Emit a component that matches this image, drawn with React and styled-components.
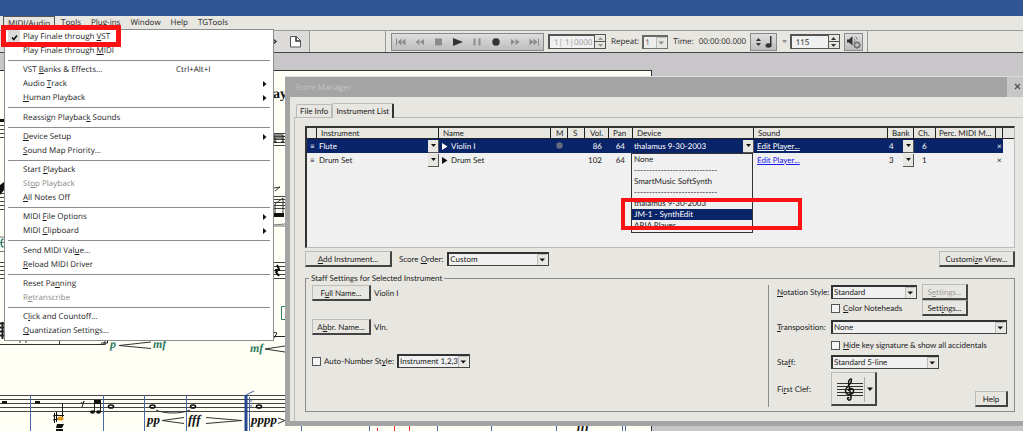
import React from "react";
import styled, { createGlobalStyle, css } from "styled-components";

const UI = '"Open Sans", "Noto Sans", sans-serif';
const DLG = 'Lato, "Liberation Sans", sans-serif';
const FACE = "#e8e6e1";
const NAVY = "#0a246a";

const Global = createGlobalStyle`
  *, *::before, *::after { box-sizing: border-box; }
  body {
    margin: 0;
    background: #c8c6c8;
    color: #1c1c1c;
    font-family: ${UI};
    font-size: 8px;
    font-variant-ligatures: none;
    text-rendering: geometricPrecision;
  }
  button, select, input { font: inherit; color: inherit; margin: 0; text-rendering: inherit; }
  u { text-underline-offset: 1px; }
`;

const Screen = styled.div`
  position: relative;
  display: flex;
  flex-direction: column;
  min-height: 100vh;
  overflow: hidden;
`;
const TitleStrip = styled.div`
  height: 16px;
  background: #2f5595;
`;
const MenuBar = styled.nav`
  display: flex;
  height: 14px;
  padding-left: 3px;
  gap: 10px;
  background: ${FACE};
`;
const MenuTitle = styled.button`
  height: 14px;
  padding: 0;
  border: 0;
  background: none;
  line-height: 12px;
  white-space: nowrap;
  ${(p) =>
    p.$open &&
    css`
      padding: 0 4px;
      margin-right: -4px;
      border: 1px solid #555;
      border-bottom: 0;
      line-height: 11px;
    `}
`;

const Toolbar = styled.div`
  display: flex;
  align-items: center;
  height: 23px;
  border-top: 1px solid #999;
  border-bottom: 1px solid #444;
  background: ${FACE};
`;
const ToolGroup = styled.div`
  display: flex;
  align-items: center;
  justify-content: flex-end;
  width: 310px;
  height: 21px;
  padding-right: 7px;
  border-right: 1px solid #999;
  background: #dcdbd9;
`;
const PlaybackGroup = styled.div`
  display: flex;
  align-items: center;
  height: 21px;
  margin-left: 75px;
  padding: 0 4px 0 2px;
  border-left: 1px solid #999;
  border-right: 1px solid #999;
`;
const Transport = styled.div`
  display: flex;
  align-items: center;
  height: 18px;
  width: 153px;
  margin: 0 4px 0 3px;
  border: 1px solid #888;
  background: linear-gradient(#dedede, #bdbdbd);
`;
const TransportButton = styled.button`
  flex: 1;
  height: 16px;
  padding: 0;
  border: 0;
  background: none;
  svg { display: block; margin: auto; }
`;
const Field = styled.input`
  width: ${(p) => p.$w}px;
  height: 15px;
  padding: 0 1px 0 4px;
  border: 1px solid #555;
  border-width: 2px 0 1px 2px;
  border-radius: 0;
  background: #f0f0f0;
  color: ${(p) => (p.$dim ? "#999" : "#222")};
`;
const Spin = styled.span`
  display: flex;
  flex-direction: column;
  width: 12px;
  height: 15px;
  border: 1px solid #555;
`;
const SpinButton = styled.button`
  display: flex;
  flex: 1;
  align-items: center;
  justify-content: center;
  padding: 0;
  border: 0;
  background: ${FACE};
  & + & { border-top: 1px solid #555; }
`;
const ToolText = styled.label`
  margin-left: ${(p) => p.$gap || 5}px;
  white-space: nowrap;
`;
const ToolButton = styled.button`
  display: flex;
  align-items: center;
  justify-content: center;
  width: ${(p) => p.$w}px;
  height: 18px;
  margin-left: 4px;
  padding: 0;
  border: 1px solid #8a8a8a;
  background: linear-gradient(#dedede, #bdbdbd);
`;

const Workspace = styled.main`
  position: relative;
  flex: 1;
  display: flex;
  padding-top: 17px;
  background: #c8c6c8;
`;
const ScorePage = styled.section`
  width: 652px;
  overflow: hidden;
  border-top: 1px solid #333;
  border-right: 1px solid #333;
  background: #fffff6;
  svg { display: block; }
`;

const Menu = styled.div`
  position: absolute;
  left: 4px;
  top: 29px;
  z-index: 3;
  display: flex;
  flex-direction: column;
  justify-content: space-between;
  width: 270px;
  min-height: 312px;
  padding: 0 3px 2px;
  border: 1px solid #8c8c8c;
  background: #fff;
`;
const MenuGroup = styled.div``;
const Rule = styled.hr`
  width: 100%;
  margin: 0;
  border: 0;
  border-top: 1px solid #8c8c8c;
`;
const MenuItem = styled.button`
  display: flex;
  align-items: center;
  width: 100%;
  height: 14px;
  padding: 0 3px 0 0;
  border: 0;
  background: none;
  color: ${(p) => (p.disabled ? "#8a8a8a" : "#1c1c1c")};
  line-height: 12px;
  text-align: left;
  white-space: nowrap;
`;
const CheckSlot = styled.span`
  display: flex;
  align-items: center;
  justify-content: center;
  width: 12px;
  height: 14px;
  margin-right: 3px;
  background: ${(p) => (p.$on ? "#dcdcdc" : "none")};
`;
const ItemText = styled.span`
  width: 153px;
`;
const Shortcut = styled.span`
  flex: 1;
`;
const Highlight = styled.div`
  position: absolute;
  z-index: 5;
  left: ${(p) => p.$x}px;
  top: ${(p) => p.$y}px;
  width: ${(p) => p.$w}px;
  height: ${(p) => p.$h}px;
  border: ${(p) => p.$line}px solid #fb1212;
  pointer-events: none;
`;

const Dialog = styled.section`
  position: absolute;
  left: 285px;
  right: 0;
  top: 23px;
  z-index: 2;
  padding: 0 0 5px 5px;
  border-top: 1px solid #ddd;
  background: #a4a4a4;
  font-family: ${DLG};
`;
const DialogTitle = styled.header`
  display: flex;
  align-items: center;
  justify-content: space-between;
  height: 20px;
  padding-left: 5px;
  color: #c4c4c4;
  font-family: ${UI};
`;
const CloseButton = styled.button`
  width: 16px;
  height: 20px;
  padding: 0 0 0 5px;
  border: 0;
  background: #c6c6c6;
`;
const DialogBody = styled.div`
  padding: 5px 0 0 4px;
  background: ${FACE};
`;
const Tabs = styled.div`
  display: flex;
  align-items: flex-end;
  height: 15px;
  padding-left: 2px;
`;
const Tab = styled.button`
  height: ${(p) => (p.$active ? 15 : 13)}px;
  padding: 0 3px;
  border: 1px solid #bbb;
  border-bottom: 0;
  border-radius: 2px 2px 0 0;
  background: ${FACE};
  white-space: nowrap;
  ${(p) =>
    p.$active &&
    css`
      position: relative;
      margin-bottom: -1px;
      border-right: 2px solid #333;
    `}
`;
const TabPanel = styled.div`
  padding: 8px 8px 9px 10px;
  border-top: 1px solid #bbb;
  border-left: 1px solid #bbb;
`;

const ListBox = styled.div`
  min-height: 122px;
  border: 1px solid #bbb;
  border-top: 2px solid #333;
  border-left: 2px solid #333;
  background: #f0f0f0;
`;
const Table = styled.table`
  width: 100%;
  table-layout: fixed;
  border-collapse: separate;
  border-spacing: 0;
`;
const Th = styled.th`
  height: 11px;
  padding: 0 0 0 ${(p) => p.$pad || 4}px;
  border-right: ${(p) => (p.$last ? "0" : "1px solid #222")};
  border-bottom: 1px solid #222;
  background: ${FACE};
  font-weight: 400;
  line-height: 10px;
  text-align: left;
  white-space: nowrap;
`;
const Tr = styled.tr`
  color: ${(p) => (p.$selected ? "#fff" : "#1c1c1c")};
  td:not(:last-child) { background: ${(p) => (p.$selected ? NAVY : "none")}; }
`;
const Td = styled.td`
  position: relative;
  height: 14px;
  padding: 0 ${(p) => p.$right || 0}px 0 ${(p) => p.$pad || 0}px;
  line-height: 13px;
  text-align: ${(p) => p.$align || "left"};
  white-space: nowrap;
`;
const CellRow = styled.div`
  display: flex;
  align-items: center;
  gap: 3px;
  & > button { margin-left: auto; }
`;
const DropButton = styled.button`
  display: flex;
  align-items: center;
  justify-content: center;
  width: 11px;
  height: 13px;
  padding: 0;
  border: 1px solid #555;
  border-width: 0 1px 1px 0;
  background: ${FACE};
`;
const PlayerLink = styled.a`
  color: ${(p) => (p.$selected ? "#fff" : "#1a1af0")};
  text-decoration: underline;
`;
const DeviceList = styled.ul`
  position: absolute;
  left: -2px;
  top: 14px;
  z-index: 4;
  width: 122px;
  margin: 0;
  padding: 0 0 1px;
  border: 1px solid #333;
  background: #f0f0f0;
  color: #1c1c1c;
  list-style: none;
`;
const DeviceOption = styled.li`
  height: 11px;
  padding-left: 2px;
  overflow: hidden;
  line-height: 11px;
  background: ${(p) => (p.$selected ? NAVY : "none")};
  color: ${(p) => (p.$selected ? "#fff" : "#1c1c1c")};
`;

const Bar = styled.div`
  display: flex;
  align-items: center;
  margin: 3px 0 6px;
  gap: 4px;
`;
const PushButton = styled.button`
  width: ${(p) => p.$w}px;
  height: 16px;
  padding: 0;
  border: 1px solid #bbb;
  border-right: 2px solid #444;
  border-bottom: 2px solid #444;
  background: ${FACE};
  color: ${(p) => (p.disabled ? "#999" : "#1c1c1c")};
  line-height: 12px;
  white-space: nowrap;
`;
const EndButton = styled(PushButton)`
  margin-left: auto;
`;
const HelpButton = styled(PushButton)`
  grid-column: 3 / -1;
  align-self: end;
  justify-self: end;
`;
const SelectBox = styled.span`
  position: relative;
  display: inline-flex;
  width: ${(p) => p.$w}px;
  svg { position: absolute; right: 2px; top: 2px; pointer-events: none; }
`;
const Select = styled.select`
  width: 100%;
  height: 14px;
  padding: 0 9px 0 1px;
  border: 1px solid #444;
  border-top: 2px solid #333;
  border-left: 2px solid #333;
  border-radius: 0;
  background: #f0f0f0;
  line-height: 11px;
  appearance: none;
`;
const Settings = styled.fieldset`
  display: flex;
  justify-content: space-between;
  min-width: 0;
  height: 139px;
  margin: 0;
  padding: 2px 6px 4px;
  border: 1px solid #8c8c8c;
`;
const Legend = styled.legend`
  height: 10px;
  margin-left: -3px;
  padding: 0 2px;
  line-height: 10px;
`;
const NameColumn = styled.div`
  display: flex;
  flex-direction: column;
  gap: 18px;
`;
const Line = styled.div`
  display: flex;
  align-items: center;
  gap: 3px;
  height: 16px;
  white-space: nowrap;
`;
const StyleColumn = styled.div`
  display: grid;
  grid-template-columns: 49px 86px 46px 1fr;
  grid-template-rows: 14px 18px 20px 16px 18px 36px;
  column-gap: 5px;
  align-items: center;
  align-content: start;
  width: 240px;
  height: 122px;
  padding-left: 8px;
  border-left: 1px solid #8c8c8c;
  white-space: nowrap;
`;
const Span = styled.div`
  display: flex;
  align-items: center;
  gap: 3px;
  grid-column: ${(p) => p.$col};
`;
const Tick = styled.input`
  width: 9px;
  height: 9px;
  border: 1px solid #555;
  border-radius: 0;
  background: #f4f4f4;
  appearance: none;
`;
const ClefButton = styled.button`
  display: flex;
  align-items: center;
  justify-content: center;
  width: 46px;
  height: 34px;
  padding: 0;
  border: 1px solid #bbb;
  border-right: 2px solid #444;
  border-bottom: 2px solid #444;
  background: ${FACE};
`;

const Down = ({ color = "#111" }) => (
  <svg width="5" height="3" viewBox="0 0 5 3"><path d="M0 0h5L2.500 3z" fill={color} /></svg>
);
const Up = ({ color = "#333" }) => (
  <svg width="5" height="3" viewBox="0 0 5 3"><path d="M0 3h5L2.500 0z" fill={color} /></svg>
);
const Right = ({ color = "#111" }) => (
  <svg width="6" height="7" viewBox="0 0 6 7"><path d="M0 0v7L5.500 3.500z" fill={color} /></svg>
);

function Drop({ w, id, value, dim }) {
  return (
    <SelectBox $w={w}>
      <Select id={id} defaultValue={value} disabled={dim}>
        <option>{value}</option>
      </Select>
      <svg width="10" height="11" viewBox="0 0 10 11">
        <path d="M0 0h10v11H0z" fill={FACE} />
        <path d="M0.500 11V0.500H10" fill="none" stroke="#bbb" />
        <path d="M2.500 4.500h5.500L5.250 7.500z" fill={dim ? "#888" : "#111"} />
      </svg>
    </SelectBox>
  );
}

function Spinner({ dim }) {
  const c = dim ? "#999" : "#333";
  return (
    <Spin>
      <SpinButton aria-label="Increase"><Up color={c} /></SpinButton>
      <SpinButton aria-label="Decrease"><Down color={c} /></SpinButton>
    </Spin>
  );
}

const transport = [
  ["Rewind to start", "M2 3.500v7h1V3.500zM7.500 3.500L3.500 7l4 3.500zM11.500 3.500L7.500 7l4 3.500z", "#8b8b8b"],
  ["Rewind", "M6.500 4L2.500 7l4 3zM11 4L7 7l4 3z", "#8b8b8b"],
  ["Stop", "M3 3.500h7v7H3z", "#8b8b8b"],
  ["Play", "M2 3v8l10-4z", "#333"],
  ["Pause", "M3.500 3.500h2v7h-2zM8.500 3.500h2v7h-2z", "#8b8b8b"],
  ["Record", "M7 3.300a3.700 3.700 0 1 1 0 7.400a3.700 3.700 0 1 1 0-7.400z", "#333"],
  ["Fast forward", "M3 4L7 7l-4 3zM7.500 4l4 3-4 3z", "#8b8b8b"],
  ["Forward to end", "M2.500 3.500l4 3.500-4 3.500zM6.500 3.500l4 3.500-4 3.500zM11 3.500v7h1v-7z", "#8b8b8b"],
];

const menu = [
  [
    { t: <>Play Finale through <u>V</u>ST</>, on: true },
    { t: <>Play Finale through <u>M</u>IDI</> },
  ],
  [
    { t: <>VST <u>B</u>anks &amp; Effects...</>, key: "Ctrl+Alt+I" },
    { t: <>Audio <u>T</u>rack</>, sub: true },
    { t: <><u>H</u>uman Playback</>, sub: true },
  ],
  [{ t: <>Reassign Playbac<u>k</u> Sounds</> }],
  [{ t: <><u>D</u>evice Setup</>, sub: true }, { t: <><u>S</u>ound Map Priority...</> }],
  [
    { t: <>Start <u>P</u>layback</> },
    { t: <>St<u>o</u>p Playback</>, off: true },
    { t: <><u>A</u>ll Notes Off</> },
  ],
  [{ t: <>MIDI <u>F</u>ile Options</>, sub: true }, { t: <>MIDI <u>C</u>lipboard</>, sub: true }],
  [{ t: <>Send MIDI Val<u>u</u>e...</> }, { t: <><u>R</u>eload MIDI Driver</> }],
  [{ t: <>Reset Pa<u>n</u>ning</> }, { t: <>R<u>e</u>transcribe</>, off: true }],
  [{ t: <>C<u>l</u>ick and Countoff...</> }, { t: <><u>Q</u>uantization Settings...</> }],
];

const columns = [10, 122, 112, 17, 17, 24, 24, 121, 134, 26, 22, 60, 7];

function Staff({ y, gap = 4, x1 = 0, x2 = 651 }) {
  return (
    <path
      d={[0, 1, 2, 3, 4].map((i) => `M${x1} ${y + i * gap + 0.5}H${x2}`).join("")}
      stroke="#444"
    />
  );
}

const mark = { fontFamily: '"Liberation Serif", serif', fontStyle: "italic", fontWeight: 700 };

/* Drawn in window coordinates; the view box starts where the paper starts. */
function Score() {
  return (
    <svg width="651" height="360" viewBox="0 71 651 360" fill="none">
      <text x="273" y="98" fontFamily='"Liberation Serif", serif' fontWeight="700" fontSize="14" fill="#111">ay</text>
      <Staff y={121} x2={4} /><Staff y={133} gap={3} x1={273} x2={285} />
      <path d="M274 135h9v3h-9zM275 138v5M283 138v5M274 142h3M281 142h3" stroke="#111" />
      <Staff y={193} gap={4} x2={4} /><Staff y={196} gap={3} x1={273} x2={285} />
      <path d="M274 188l6-1-5 4M275 204v12M283 198v18M275 204l8-6" stroke="#333" />
      <path d="M274 213h10v4h-10zM0 185l4-3v8l-4 5zM0 119h4v3H0z" fill="#111" />
      <path d="M273 225l12-1M273 226h12M0 242.500h4M0 251.500h4M0 237h4" stroke="#777" />
      <path d="M3.500 239c-3 0-3 8 0 8" stroke="#2c7a70" strokeWidth="1.500" />
      <Staff y={262} x1={273} x2={285} /><Staff y={262} x2={4} />
      <path d="M277 265l2 4-3 3 3 4M275 270h5" stroke="#111" strokeWidth="2" />
      <path d="M285 306.500h-3.500v13h3.500" stroke="#2c7a70" />
      <path d="M0 323.500h4M0 327.500h4M0 331.500h4M0 335.500h4M2.500 322v17" stroke="#222" strokeWidth="2" />
      <path d="M273 336.500h12M273 332l4 1-3 5" stroke="#222" />
      <path d="M0 344.500h104M59.500 340v4M20 341v2M26 341v2" stroke="#333" />
      <path d="M101 345c0-3 3-3 4 0M105 340v5M107.500 340v3h-4" stroke="#222" />
      <path d="M151 342l-32 3.500 32 3M285 346l-20 3 20 3" stroke="#333" />
      <g fontSize="12" fill="#2c7a5c" {...mark}>
        <text x="110" y="348">p</text>
        <text x="153" y="348">mf</text>
        <text x="250" y="352">mf</text>
      </g>
      <Staff y={395} />
      <path d="M30.500 395v36M103.500 395v36M144.500 395v36M186.500 395v36M301.500 395v36M369.500 395v36M437.500 395v36M491.500 395v36M556.500 395v36M622.500 395v36M625.500 395v36" stroke="#4a67a8" />
      <path d="M246 395v36" stroke="#24478f" strokeWidth="3" />
      <path d="M249.500 397v34M246 395l8-4M251 400v2M251 405v2" stroke="#4a67a8" />
      <path d="M377.500 428v3M394.500 420v11M409.500 420v11" stroke="#e33" />
      <path d="M2 401h5v2.500H2zM35 401h5v2.500h-5z" fill="#111" />
      <path d="M62.500 403v16M81 402c1 2 3 1 3-1l-2 6M94.500 400v12M100.500 400v12" stroke="#222" />
      <path d="M94 400h7v4h-7zM90 412a2.500 1.800 0 1 0 5 0a2.500 1.800 0 1 0-5 0M96 412a2.500 1.800 0 1 0 5 0a2.500 1.800 0 1 0-5 0M57 424h7l-2 4h-6zM56 429h7v2h-7z" fill="#111" />
      <ellipse cx="60.500" cy="418.500" rx="3" ry="2" fill="#e39a1d" />
      <path d="M54.500 413v10M56.500 412v10M53 416l5-1M53 420l5-1M57 415.500h7" stroke="#111" />
      <g stroke="#111" strokeWidth="1.600">
        <ellipse cx="111" cy="406.500" rx="2.500" ry="1.500" />
        <ellipse cx="152.500" cy="406.500" rx="2.500" ry="1.500" />
        <ellipse cx="193" cy="406.500" rx="2.500" ry="1.500" />
        <ellipse cx="259" cy="406.500" rx="2.500" ry="1.500" />
      </g>
      <path d="M156 410c8 4 26 4 34 0M184 417.500l-22 3 22 3M206 417.500l36 3-36 3M278 418l7 2.500-7 3" stroke="#333" />
      <g fontSize="13" fill="#111" {...mark}>
        <text x="147" y="424">pp</text>
        <text x="188" y="424">fff</text>
        <text x="251" y="424">pppp</text>
        <text x="577" y="429">fff</text>
      </g>
    </svg>
  );
}

function Row({ selected, name, label, vol, bank, ch, children }) {
  return (
    <Tr $selected={selected}>
      <Td $pad={3}>≡</Td>
      <Td $pad={2}>
        <CellRow>{name}<DropButton aria-label={`${name} instrument`}><Down /></DropButton></CellRow>
      </Td>
      <Td $pad={3}>
        <CellRow><Right color={selected ? "#fff" : "#111"} />{label}</CellRow>
      </Td>
      <Td $align="center">
        {selected && (
          <svg width="7" height="7" viewBox="0 0 7 7"><circle cx="3.500" cy="3.500" r="3.200" fill="#666b80" /></svg>
        )}
      </Td>
      <Td />
      <Td $align="right" $right={7}>{vol}</Td>
      <Td $align="right" $right={8}>64</Td>
      <Td $pad={1}>{children}</Td>
      <Td $pad={3}><PlayerLink href="#player" $selected={selected}>Edit Player...</PlayerLink></Td>
      <Td $pad={1}>
        <CellRow>{bank}<DropButton aria-label={`${name} bank`}><Down /></DropButton></CellRow>
      </Td>
      <Td $pad={8}>{ch}</Td>
      <Td />
      <Td $pad={1}>×</Td>
      <Td />
    </Tr>
  );
}

function ScoreManager() {
  return (
    <Dialog aria-label="Score Manager">
      <DialogTitle>
        Score Manager
        <CloseButton aria-label="Close">
          <svg width="7" height="7" viewBox="0 0 7 7"><path d="M1 1l5 5M6 1L1 6" stroke="#555" strokeWidth="1.300" /></svg>
        </CloseButton>
      </DialogTitle>
      <DialogBody>
        <Tabs>
          <Tab>File Info</Tab>
          <Tab $active>Instrument List</Tab>
        </Tabs>
        <TabPanel>
          <ListBox>
            <Table>
              <colgroup>
                {columns.map((w, i) => <col key={i} width={w} />)}
                <col />
              </colgroup>
              <thead>
                <tr>
                  <Th />
                  <Th>Instrument</Th>
                  <Th>Name</Th>
                  <Th $pad={5}>M</Th>
                  <Th $pad={5}>S</Th>
                  <Th $pad={5}>Vol.</Th>
                  <Th>Pan</Th>
                  <Th>Device</Th>
                  <Th>Sound</Th>
                  <Th>Bank</Th>
                  <Th>Ch.</Th>
                  <Th $pad={3}>Perc. MIDI M...</Th>
                  <Th />
                  <Th $last />
                </tr>
              </thead>
              <tbody>
                <Row selected name="Flute" label="Violin I" vol="86" bank="4" ch="6">
                  <CellRow>
                    thalamus 9-30-2003
                    <DropButton aria-label="Device"><Down /></DropButton>
                  </CellRow>
                  <DeviceList>
                    <DeviceOption>None</DeviceOption>
                    <DeviceOption>----------------------------</DeviceOption>
                    <DeviceOption>SmartMusic SoftSynth</DeviceOption>
                    <DeviceOption>----------------------------</DeviceOption>
                    <DeviceOption>thalamus 9-30-2003</DeviceOption>
                    <DeviceOption $selected>JM-1 - SynthEdit</DeviceOption>
                    <DeviceOption>ARIA Player</DeviceOption>
                  </DeviceList>
                </Row>
                <Row name="Drum Set" label="Drum Set" vol="102" bank="3" ch="1" />
              </tbody>
            </Table>
          </ListBox>
          <Bar>
            <PushButton $w={87}><u>A</u>dd Instrument...</PushButton>
            <ToolText $gap={3} htmlFor="order">Score <u>O</u>rder:</ToolText>
            <Drop w={102} id="order" value="Custom" />
            <EndButton $w={76}>Customi<u>z</u>e View...</EndButton>
          </Bar>
          <Settings>
            <Legend>Staff Settings for Selected Instrument</Legend>
            <NameColumn>
              <Line><PushButton $w={59}>F<u>u</u>ll Name...</PushButton>Violin I</Line>
              <Line><PushButton $w={59}>A<u>b</u>br. Name...</PushButton>Vln.</Line>
              <Line>
                <Tick type="checkbox" id="auto" />
                <label htmlFor="auto">Auto-Number St<u>y</u>le:</label>
                <Drop w={73} id="autoStyle" value="Instrument 1,2,3" />
              </Line>
            </NameColumn>
            <StyleColumn>
              <label htmlFor="notation"><u>N</u>otation Style:</label>
              <Drop w={86} id="notation" value="Standard" />
              <PushButton $w={46} disabled>S<u>e</u>ttings...</PushButton>
              <Span $col="2">
                <Tick type="checkbox" id="color" />
                <label htmlFor="color"><u>C</u>olor Noteheads</label>
              </Span>
              <PushButton $w={46}>Sett<u>i</u>ngs...</PushButton>
              <Span $col="1"><label htmlFor="transposition"><u>T</u>ransposition:</label></Span>
              <Span $col="2 / -1"><Drop w={176} id="transposition" value="None" /></Span>
              <Span $col="2 / -1">
                <Tick type="checkbox" id="hide" />
                <label htmlFor="hide"><u>H</u>ide key signature &amp; show all accidentals</label>
              </Span>
              <label htmlFor="staff">Sta<u>f</u>f:</label>
              <Span $col="2 / -1"><Drop w={108} id="staff" value="Standard 5-line" /></Span>
              <label htmlFor="clef">Fi<u>r</u>st Clef:</label>
              <ClefButton id="clef" aria-label="Treble clef">
                <svg width="40" height="30" viewBox="0 0 40 30" fill="none">
                  <path d="M3 9.500h26M3 12.500h26M3 15.500h26M3 18.500h26M3 21.500h26" stroke="#333" />
                  <path d="M30.500 3v25" stroke="#aaa" />
                  <path d="M14 25.500c-1-1.500 0-2.500 1.300-1.500M14 25.500c1.500 1.500 3.500 0 3-2.500L14.500 9c0-3 3-6 3-2.500 0 4.500-6 5.500-6 10.500 0 5 8 4 8 0 0-3.500-5-3-5 0" stroke="#111" strokeWidth="1.500" />
                  <path d="M33 13.500h6l-3 3.500z" fill="#111" />
                </svg>
              </ClefButton>
              <HelpButton $w={33}>Help</HelpButton>
            </StyleColumn>
          </Settings>
        </TabPanel>
      </DialogBody>
    </Dialog>
  );
}

export default function App() {
  return (
    <Screen>
      <Global />
      <TitleStrip />
      <MenuBar>
        <MenuTitle $open>MIDI/Audio</MenuTitle>
        <MenuTitle>Tools</MenuTitle>
        <MenuTitle>Plug-ins</MenuTitle>
        <MenuTitle>Window</MenuTitle>
        <MenuTitle>Help</MenuTitle>
        <MenuTitle>TGTools</MenuTitle>
      </MenuBar>
      <Toolbar>
        <ToolGroup>
          <svg width="29" height="13" viewBox="0 0 29 13" fill="none">
            <path d="M0 4l3 2.500L0 9" stroke="#333" strokeWidth="1.500" />
            <path d="M17.500 1.500h6l4 4v6.500h-10z" fill="#fff" stroke="#555" />
            <path d="M23 1.500v4.500h4.500" stroke="#333" strokeWidth="1.500" />
          </svg>
        </ToolGroup>
        <PlaybackGroup>
          <Transport>
            {transport.map(([name, d, color]) => (
              <TransportButton key={name} aria-label={name}>
                <svg width="14" height="14" viewBox="0 0 14 14"><path d={d} fill={color} /></svg>
              </TransportButton>
            ))}
          </Transport>
          <Field $w={46} $dim defaultValue="1| 1|0000" aria-label="Position" />
          <Spinner dim />
          <ToolText htmlFor="repeat">Repeat:</ToolText>
          <ToolText as="span" $gap={3}><Drop w={26} id="repeat" value="1" dim /></ToolText>
          <ToolText as="span">Time:</ToolText>
          <ToolText as="span">00:00:00.000</ToolText>
          <ToolButton $w={27} aria-label="Beat unit">
            <svg width="20" height="14" viewBox="0 0 20 14">
              <path d="M2 6h5L4.500 3zM2 8h5l-2.500 3zM16 1h1.500v9.500H16z" fill="#333" />
              <ellipse cx="14.500" cy="10.500" rx="3" ry="2.200" fill="#333" />
            </svg>
          </ToolButton>
          <ToolText htmlFor="tempo">=</ToolText>
          <ToolText as="span" $gap={3}><Field $w={38} id="tempo" defaultValue="115" /></ToolText>
          <Spinner />
          <ToolButton $w={19} aria-label="Playback settings">
            <svg width="15" height="14" viewBox="0 0 15 14" fill="none">
              <path d="M1 4.500h2L6.500 1v9.500L3 7.500H1z" fill="#333" />
              <path d="M8 3.500c1 1 1 3 0 4M9.500 1.500c1 1 1.500 2 1.500 3" stroke="#777" />
              <circle cx="11" cy="10" r="2.500" stroke="#777" strokeWidth="1.500" />
              <path d="M11 6v1.500M11 12.500V14M7 10h1.500M13.500 10H15M8.200 7.200l1 1M12.800 11.800l1 1M13.800 7.200l-1 1M9.200 11.800l-1 1" stroke="#777" />
            </svg>
          </ToolButton>
        </PlaybackGroup>
      </Toolbar>
      <Workspace>
        <ScorePage><Score /></ScorePage>
        <ScoreManager />
      </Workspace>
      <Menu>
        {menu.map((group, i) => (
          <React.Fragment key={i}>
            {i > 0 && <Rule />}
            <MenuGroup>
              {group.map((item, j) => (
                <MenuItem key={j} disabled={item.off}>
                  <CheckSlot $on={item.on}>
                    {item.on && (
                      <svg width="7" height="7" viewBox="0 0 7 7"><path d="M1 3.500L2.800 5.500 6 1.500" fill="none" stroke="#111" strokeWidth="1.600" /></svg>
                    )}
                  </CheckSlot>
                  <ItemText>{item.t}</ItemText>
                  <Shortcut>{item.key}</Shortcut>
                  {item.sub && <svg width="4" height="6" viewBox="0 0 4 6"><path d="M0 0v6l3.500-3z" fill="#111" /></svg>}
                </MenuItem>
              ))}
            </MenuGroup>
          </React.Fragment>
        ))}
      </Menu>
      <Highlight $x={1} $y={25} $w={120} $h={22} $line={5} />
      <Highlight $x={621} $y={198} $w={181} $h={32} $line={4} />
    </Screen>
  );
}
